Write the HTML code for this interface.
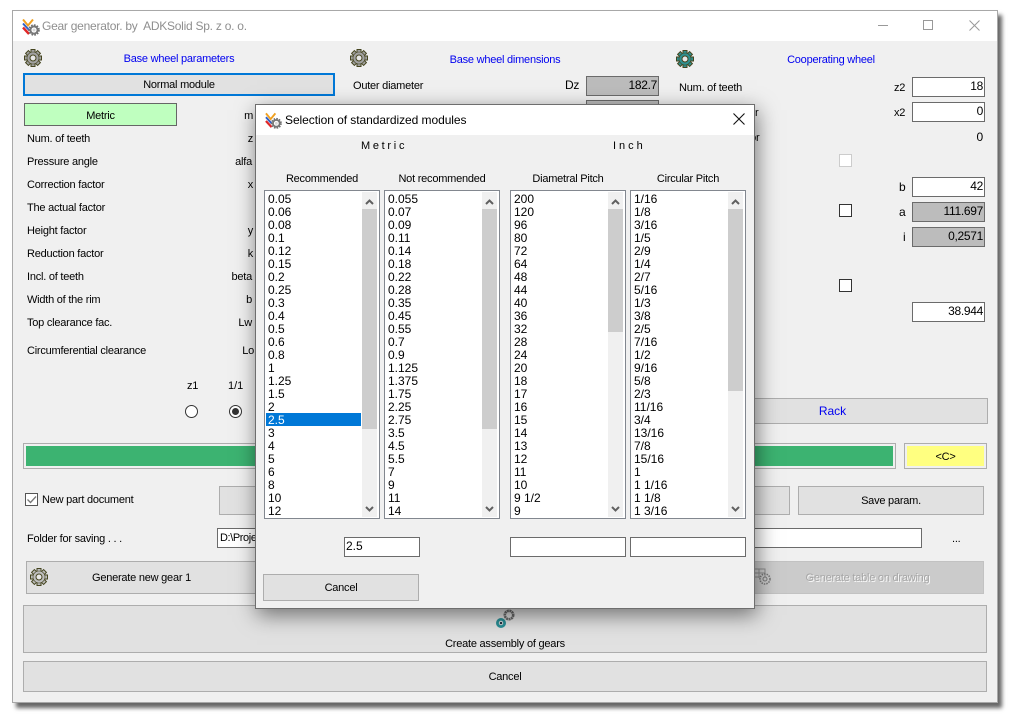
<!DOCTYPE html>
<html><head><meta charset="utf-8"><title>Gear generator</title>
<style>
html,body{margin:0;padding:0;background:#fff}
body{width:1013px;height:718px;overflow:hidden;position:relative;font-family:"Liberation Sans",sans-serif;font-size:11px;color:#000}
div{box-sizing:border-box;position:absolute}
.t{position:absolute;line-height:14px;white-space:pre;margin-top:1px;letter-spacing:-.23px}
.c{text-align:center}
.b{color:#0000f0}
.btn{background:#e1e1e1;border:1px solid #adadad}
.inp{background:#fff;border:1px solid #6b6b6b;text-align:right;padding:0 1px;line-height:17px;font-size:12px;letter-spacing:-.3px}
.ro{background:#bcbcbc;border:1px solid #6b6b6b;text-align:right;padding:0 1px;line-height:17px;font-size:12px;letter-spacing:-.3px}
.list{background:#fff;border:1px solid #82878f;top:190px;width:116px;height:329px}
.items{position:absolute;left:3px;top:2px;line-height:13px;font-size:12px;white-space:pre}
.sb{position:absolute;left:97px;top:1px;width:15px;height:325px;background:#f0f0f0}
.th{position:absolute;left:0;top:17px;width:15px;background:#cdcdcd}
.sb svg{position:absolute;left:3px;width:9px;height:6px}
.cb{background:#fff;border:1px solid #333;width:13px;height:13px}
svg{position:absolute;overflow:visible}
</style></head><body>
<svg width="0" height="0" style="position:absolute"><defs>
<symbol id="g" viewBox="0 0 18 18" overflow="visible">
<g fill="currentColor" stroke="#45451f" stroke-width="1">
<rect x="7" y=".5" width="4" height="17"/><rect x="7" y=".5" width="4" height="17" transform="rotate(45 9 9)"/><rect x="7" y=".5" width="4" height="17" transform="rotate(90 9 9)"/><rect x="7" y=".5" width="4" height="17" transform="rotate(135 9 9)"/>
</g><circle cx="9" cy="9" r="6" fill="currentColor" stroke="#45451f" stroke-width=".6"/><circle cx="9" cy="9" r="3" fill="#e8e8e8" stroke="#45451f"/>
</symbol>
<symbol id="logo" viewBox="0 0 18 18" overflow="visible">
<path d="M1 1.5l5 6 5-6" fill="none" stroke="#f0a020" stroke-width="2"/>
<path d="M1 5.5l6 6.5" fill="none" stroke="#2f60c8" stroke-width="2"/>
<path d="M1 9.5l6 6.5" fill="none" stroke="#e02828" stroke-width="2.4"/>
<circle cx="12" cy="12" r="4.8" fill="none" stroke="#6e6e6e" stroke-width="2" stroke-dasharray="1.6 1.2"/>
<circle cx="12" cy="12" r="3.6" fill="none" stroke="#777" stroke-width="2"/>
<circle cx="12" cy="12" r="1.5" fill="#d8d8d8"/>
</symbol>
<symbol id="up" viewBox="0 0 9 6"><path d="M1 5l3.5-3.5L8 5" fill="none" stroke="#606060" stroke-width="2"/></symbol>
<symbol id="dn" viewBox="0 0 9 6"><path d="M1 1l3.5 3.5L8 1" fill="none" stroke="#606060" stroke-width="2"/></symbol>
</defs></svg>

<!-- main window -->
<div style="left:12px;top:10px;width:986px;height:693px;background:#f0f0f0;border:1px solid #a8a8a8;box-shadow:4px 5px 4px rgba(0,0,0,.6)">
<div style="left:0;top:0;width:984px;height:30px;background:#fff"></div>
</div>
<svg style="left:22px;top:18px" width="18" height="18"><use href="#logo" width="18" height="18"/></svg>
<span class="t" style="left:42px;top:18px;font-size:12px;color:#8f8f8f;letter-spacing:-.25px">Gear generator. by  ADKSolid Sp. z o. o.</span>
<svg style="left:878px;top:25px" width="12" height="2"><path d="M0 .5h10" stroke="#999"/></svg>
<div style="left:923px;top:20px;width:10px;height:10px;border:1px solid #999"></div>
<svg style="left:969px;top:20px" width="11" height="11"><path d="M.5.5l10 10M10.5.5l-10 10" stroke="#999"/></svg>

<!-- column 1 -->
<svg style="left:24px;top:49px;color:#a2a2a2" width="18" height="18"><use href="#g" width="18" height="18"/></svg>
<span class="t c b" style="left:79px;width:200px;top:51px">Base wheel parameters</span>
<div style="left:23px;top:73px;width:312px;height:23px;background:#e1e1e1;border:2px solid #0078d7"></div>
<span class="t c" style="left:23px;width:312px;top:77px">Normal module</span>
<div style="left:24px;top:103px;width:153px;height:23px;background:#bfffbf;border:1px solid #666"></div>
<span class="t c" style="left:24px;width:153px;top:108px">Metric</span>
<span class="t" style="left:27px;top:131px">Num. of teeth</span>
<span class="t" style="left:27px;top:154px">Pressure angle</span>
<span class="t" style="left:27px;top:177px">Correction factor</span>
<span class="t" style="left:27px;top:200px">The actual factor</span>
<span class="t" style="left:27px;top:223px">Height factor</span>
<span class="t" style="left:27px;top:246px">Reduction factor</span>
<span class="t" style="left:27px;top:269px">Incl. of teeth</span>
<span class="t" style="left:27px;top:292px">Width of the rim</span>
<span class="t" style="left:27px;top:315px">Top clearance fac.</span>
<span class="t" style="left:27px;top:343px">Circumferential clearance</span>
<span class="t" style="right:760px;top:108px">m</span>
<span class="t" style="right:760px;top:131px">z</span>
<span class="t" style="right:761px;top:154px">alfa</span>
<span class="t" style="right:760px;top:177px">x</span>
<span class="t" style="right:760px;top:223px">y</span>
<span class="t" style="right:760px;top:246px">k</span>
<span class="t" style="right:761px;top:269px">beta</span>
<span class="t" style="right:761px;top:292px">b</span>
<span class="t" style="right:761px;top:315px">Lw</span>
<span class="t" style="right:759px;top:343px">Lo</span>
<span class="t" style="left:187px;top:378px">z1</span>
<span class="t" style="left:228px;top:378px;letter-spacing:0">1/1</span>
<div style="left:185px;top:405px;width:13px;height:13px;border-radius:50%;background:#fff;border:1px solid #333"></div>
<div style="left:229px;top:405px;width:13px;height:13px;border-radius:50%;background:#fff;border:1px solid #333"></div>
<div style="left:232px;top:408px;width:7px;height:7px;border-radius:50%;background:#333"></div>

<!-- column 2 -->
<svg style="left:350px;top:49px;color:#a2a2a2" width="18" height="18"><use href="#g" width="18" height="18"/></svg>
<span class="t c b" style="left:405px;width:200px;top:52px">Base wheel dimensions</span>
<span class="t" style="left:353px;top:78px">Outer diameter</span>
<span class="t" style="left:565px;top:77px;font-size:12px">Dz</span>
<div class="ro" style="left:586px;top:76px;width:73px;height:20px">182.7</div>
<span class="t" style="left:353px;top:101px">Pitch diameter</span>
<span class="t" style="left:565px;top:101px;font-size:12px">Dp</span>
<div class="ro" style="left:586px;top:100px;width:73px;height:20px">172.7</div>

<!-- column 3 -->
<svg style="left:676px;top:50px;color:#2f8f8f" width="18" height="18"><use href="#g" width="18" height="18"/></svg>
<span class="t c b" style="left:731px;width:200px;top:52px">Cooperating wheel</span>
<span class="t" style="left:679px;top:80px">Num. of teeth</span>
<span class="t" style="left:681px;top:105px">Correction factor</span>
<span class="t" style="left:683px;top:130px">Reduction factor</span>
<span class="t" style="left:894px;top:80px">z2</span>
<div class="inp" style="left:912px;top:77px;width:73px;height:20px">18</div>
<span class="t" style="left:894px;top:105px">x2</span>
<div class="inp" style="left:912px;top:102px;width:73px;height:20px">0</div>
<span class="t" style="right:30px;top:129px;font-size:12px">0</span>
<div style="left:839px;top:154px;width:13px;height:13px;background:#fff;border:1px solid #ccc"></div>
<span class="t" style="left:899px;top:179px;font-size:12px">b</span>
<div class="inp" style="left:912px;top:177px;width:73px;height:20px">42</div>
<div class="cb" style="left:839px;top:204px"></div>
<span class="t" style="left:899px;top:204px;font-size:12px">a</span>
<div class="ro" style="left:912px;top:202px;width:73px;height:20px">111.697</div>
<span class="t" style="left:903px;top:229px;font-size:12px">i</span>
<div class="ro" style="left:912px;top:227px;width:73px;height:20px">0,2571</div>
<div class="cb" style="left:839px;top:279px"></div>
<div class="inp" style="left:912px;top:302px;width:73px;height:20px">38.944</div>

<div class="btn" style="left:677px;top:398px;width:311px;height:26px"></div>
<span class="t c b" style="left:677px;width:311px;top:403px;font-size:12px;letter-spacing:0">Rack</span>

<div style="left:23px;top:443px;width:873px;height:26px;background:#3cb371;border:3px solid #f0f0f0;outline:1px solid #adadad;outline-offset:-1px"></div>
<div style="left:904px;top:443px;width:83px;height:26px;background:#ffff80;border:3px solid #f0f0f0;outline:1px solid #adadad;outline-offset:-1px"></div>
<span class="t c" style="left:904px;width:83px;top:449px">&lt;C&gt;</span>

<div style="left:25px;top:493px;width:13px;height:13px;background:#fff;border:1px solid #555"></div>
<svg style="left:27px;top:496px" width="10" height="8"><path d="M.5 3.5l3 3 5.5-6" fill="none" stroke="#777" stroke-width="1.3"/></svg>
<span class="t" style="left:42px;top:492px">New part document</span>
<div class="btn" style="left:219px;top:486px;width:571px;height:29px"></div>
<div class="btn" style="left:798px;top:486px;width:186px;height:29px"></div>
<span class="t c" style="left:798px;width:186px;top:493px">Save param.</span>

<span class="t" style="left:27px;top:531px">Folder for saving . . .</span>
<div style="left:217px;top:528px;width:705px;height:20px;background:#fff;border:1px solid #6b6b6b;padding:0 2px;line-height:18px;letter-spacing:-.4px">D:\Projects</div>
<span class="t" style="left:952px;top:531px">...</span>

<div class="btn" style="left:26px;top:561px;width:470px;height:33px"></div>
<svg style="left:30px;top:568px;color:#bdbdbd" width="18" height="18"><use href="#g" width="18" height="18"/></svg>
<span class="t" style="left:92px;top:570px">Generate new gear 1</span>
<div style="left:510px;top:561px;width:474px;height:33px;background:#cbcbcb;border:1px solid #c2c2c2"></div>
<svg style="left:753px;top:568px" width="22" height="20"><path d="M1 1h11v8M1 5h11M1 9h6M6 1v9" fill="none" stroke="#8d8d8d"/><circle cx="12" cy="11" r="5" fill="none" stroke="#7a7a7a" stroke-width="1.6" stroke-dasharray="1.5 1"/><circle cx="12" cy="11" r="2" fill="none" stroke="#7a7a7a"/></svg>
<span class="t c" style="left:770px;width:195px;top:570px;color:#a6a6a6;text-shadow:1px 1px 0 #fafafa">Generate table on drawing</span>

<div class="btn" style="left:23px;top:605px;width:964px;height:48px"></div>
<svg style="left:496px;top:608px" width="20" height="20"><circle cx="13" cy="7" r="4.2" fill="#ddd" stroke="#6a6a6a" stroke-width="2.6" stroke-dasharray="2 .5"/><circle cx="13" cy="7" r="2" fill="#ddd"/><circle cx="5" cy="15" r="3.6" fill="#eee" stroke="#2a8f96" stroke-width="2.8"/><circle cx="5" cy="15" r="1.3" fill="#234"/></svg>
<span class="t c" style="left:23px;width:964px;top:636px">Create assembly of gears</span>
<div class="btn" style="left:23px;top:661px;width:964px;height:31px"></div>
<span class="t c" style="left:23px;width:964px;top:669px">Cancel</span>

<!-- dialog -->
<div style="left:255px;top:104px;width:500px;height:505px;background:#f0f0f0;border:1px solid #6e6e6e;box-shadow:2px 6px 20px rgba(0,0,0,.5)">
<div style="left:0;top:0;width:498px;height:30px;background:#fff"></div>
</div>
<svg style="left:265px;top:112px" width="17" height="17"><use href="#logo" width="17" height="17"/></svg>
<span class="t" style="left:285px;top:112px;font-size:12px;letter-spacing:-.06px">Selection of standardized modules</span>
<svg style="left:733px;top:113px" width="12" height="12"><path d="M.5.5l11 11M11.5.5l-11 11" stroke="#111" stroke-width="1.1"/></svg>
<span class="t" style="left:361px;top:138px;letter-spacing:2.7px">Metric</span>
<span class="t" style="left:613px;top:138px;letter-spacing:3px">Inch</span>
<span class="t c" style="left:264px;width:116px;top:171px">Recommended</span>
<span class="t c" style="left:384px;width:116px;top:171px">Not recommended</span>
<span class="t c" style="left:510px;width:116px;top:171px">Diametral Pitch</span>
<span class="t c" style="left:630px;width:116px;top:171px">Circular Pitch</span>

<div class="list" style="left:264px">
<div style="left:1px;top:222px;width:95px;height:13px;background:#0078d7"></div>
<span class="items">0.05
0.06
0.08
0.1
0.12
0.15
0.2
0.25
0.3
0.4
0.5
0.6
0.8
1
1.25
1.5
2
<span style="color:#fff">2.5</span>
3
4
5
6
8
10
12</span>
<div class="sb"><div class="th" style="height:220px"></div><svg style="top:7px"><use href="#up" width="9" height="6"/></svg><svg style="top:314px"><use href="#dn" width="9" height="6"/></svg></div>
</div>
<div class="list" style="left:384px">
<span class="items">0.055
0.07
0.09
0.11
0.14
0.18
0.22
0.28
0.35
0.45
0.55
0.7
0.9
1.125
1.375
1.75
2.25
2.75
3.5
4.5
5.5
7
9
11
14</span>
<div class="sb"><div class="th" style="height:220px"></div><svg style="top:7px"><use href="#up" width="9" height="6"/></svg><svg style="top:314px"><use href="#dn" width="9" height="6"/></svg></div>
</div>
<div class="list" style="left:510px">
<span class="items">200
120
96
80
72
64
48
44
40
36
32
28
24
20
18
17
16
15
14
13
12
11
10
9 1/2
9</span>
<div class="sb"><div class="th" style="height:123px"></div><svg style="top:7px"><use href="#up" width="9" height="6"/></svg><svg style="top:314px"><use href="#dn" width="9" height="6"/></svg></div>
</div>
<div class="list" style="left:630px">
<span class="items">1/16
1/8
3/16
1/5
2/9
1/4
2/7
5/16
1/3
3/8
2/5
7/16
1/2
9/16
5/8
2/3
11/16
3/4
13/16
7/8
15/16
1
1 1/16
1 1/8
1 3/16</span>
<div class="sb"><div class="th" style="height:182px"></div><svg style="top:7px"><use href="#up" width="9" height="6"/></svg><svg style="top:314px"><use href="#dn" width="9" height="6"/></svg></div>
</div>

<div class="inp" style="left:344px;top:537px;width:76px;height:20px;text-align:left;letter-spacing:0">2.5</div>
<div class="inp" style="left:510px;top:537px;width:116px;height:20px"></div>
<div class="inp" style="left:630px;top:537px;width:116px;height:20px"></div>
<div class="btn" style="left:263px;top:574px;width:156px;height:27px"></div>
<span class="t c" style="left:263px;width:156px;top:580px">Cancel</span>
</body></html>
